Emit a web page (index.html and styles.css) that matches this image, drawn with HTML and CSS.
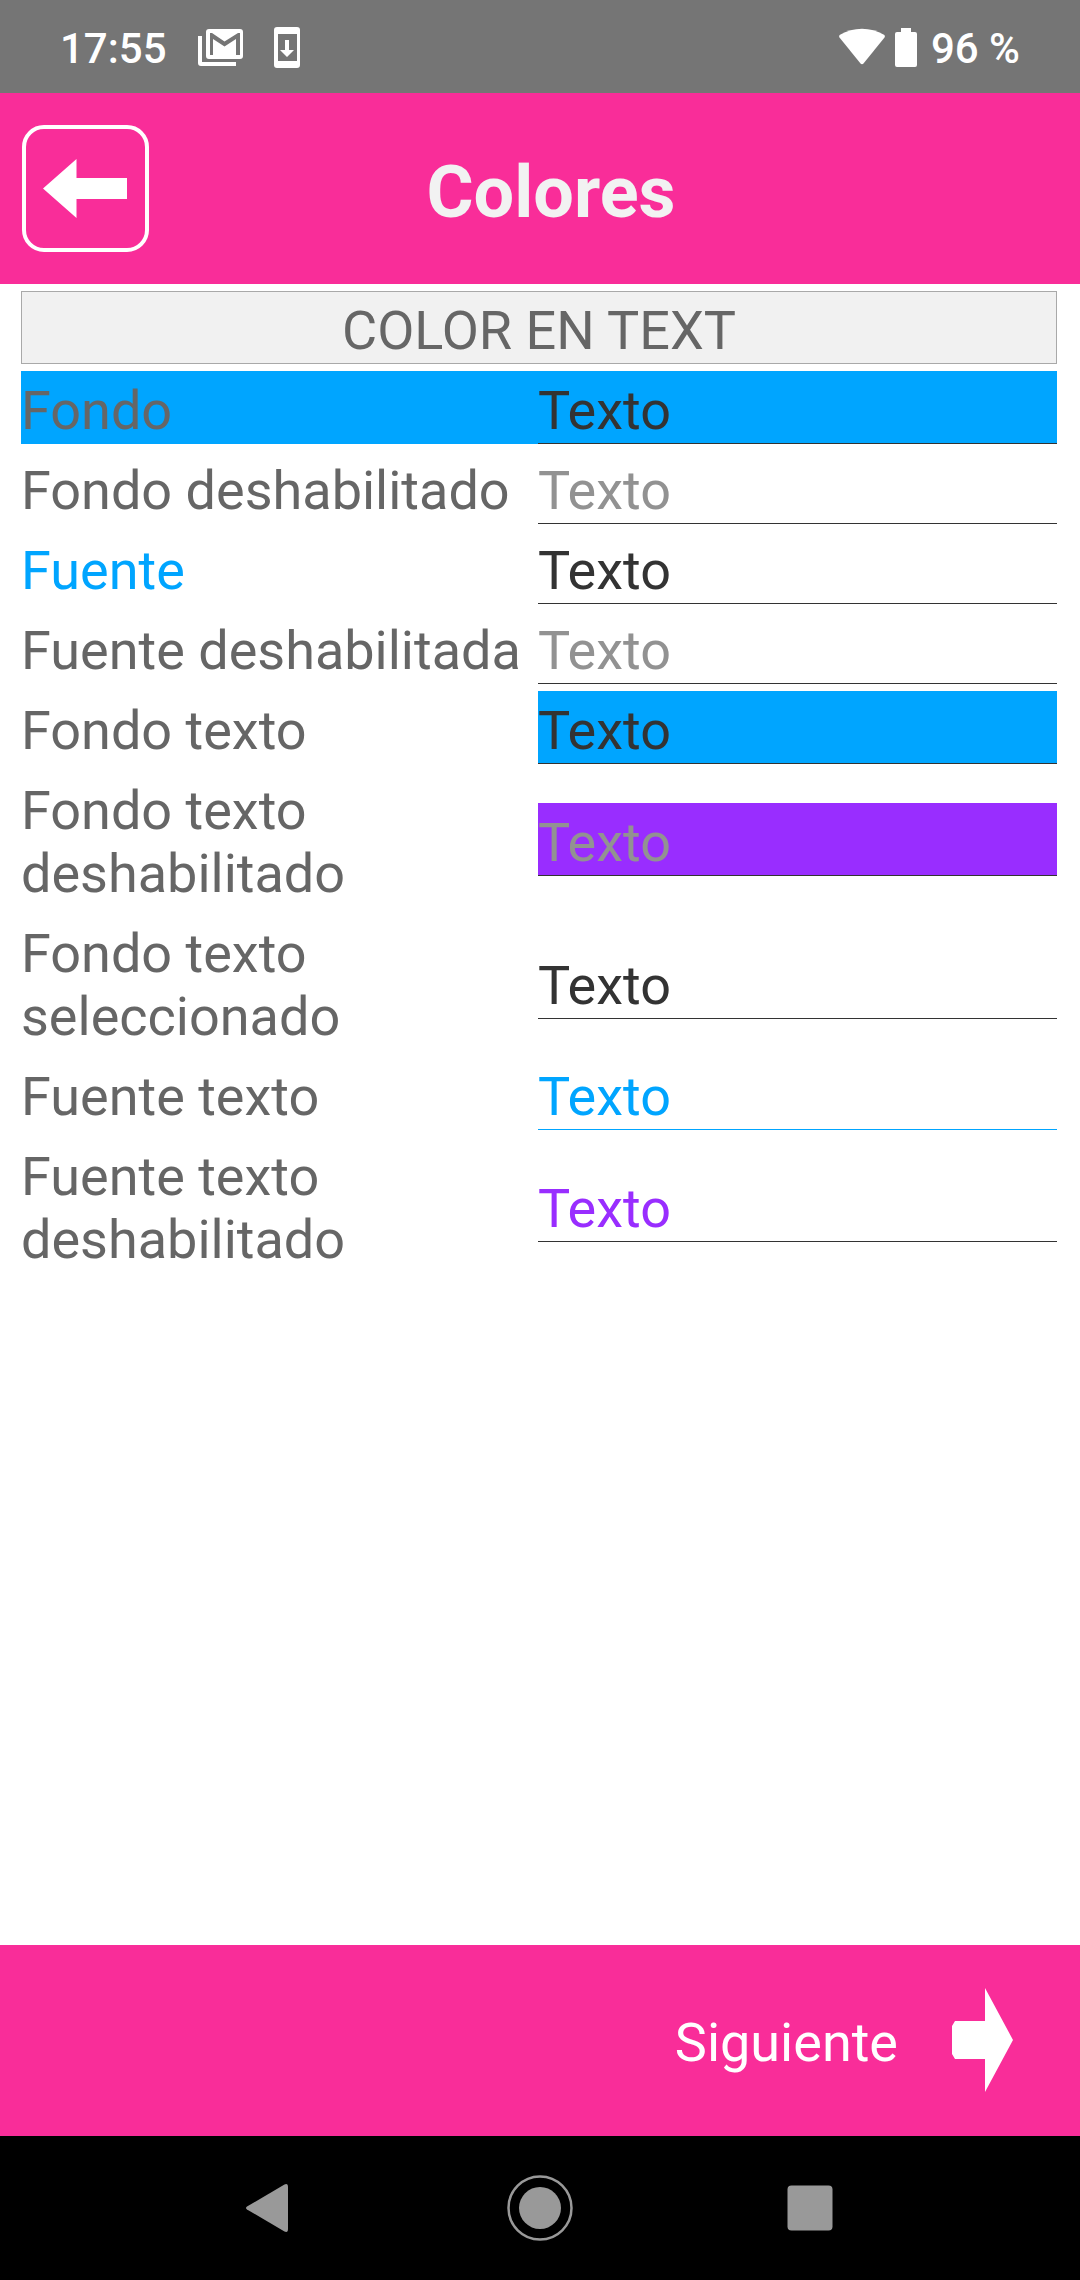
FILE: index.html
```html
<!DOCTYPE html>
<html lang="es">
<head>
    <meta charset="UTF-8">
    <meta name="viewport" content="width=device-width, initial-scale=1.0">
    <title>Colores</title>
    <link rel="stylesheet" href="styles.css">
</head>
<body>
    <div class="status-bar">
        <span class="status-time">17:55</span>
        <svg class="icon-mail" width="46" height="40" viewBox="0 0 46 40" fill="#fff">
            <path d="M0 8h4v26h34v4H3a3 3 0 0 1-3-3z"/>
            <path fill-rule="evenodd" d="M11 1h31a3 3 0 0 1 3 3v24a3 3 0 0 1-3 3H11a3 3 0 0 1-3-3V4a3 3 0 0 1 3-3zM12 5v22h3V11l11.500 7.500L38 11v16h4V5h-2L26.500 13.500 14 5z"/>
        </svg>
        <svg class="icon-phone" width="26" height="42" viewBox="0 0 26 42" fill="#fff">
            <path fill-rule="evenodd" d="M3 0h20a3 3 0 0 1 3 3v35a3 3 0 0 1-3 3H3a3 3 0 0 1-3-3V3a3 3 0 0 1 3-3zM4 7v27h19V7z"/>
            <path d="M11 13h4v10h5l-7 7-7-7h5z"/>
        </svg>
        <div class="status-right">
            <svg width="46" height="40" viewBox="0 0 46 40" fill="#fff">
                <path d="M.500 9.500Q-.500 8 1 6.800C14-1.400 32-1.400 45 6.800q1.500 1.200.500 2.700L24.500 35.500q-1.500 1.500-3 0z"/>
            </svg>
            <svg width="22" height="40" viewBox="0 0 22 40" fill="#fff">
                <path d="M6 0h10v4h4a2 2 0 0 1 2 2v31a2 2 0 0 1-2 2H2a2 2 0 0 1-2-2V6a2 2 0 0 1 2-2h4z"/>
            </svg>
            <span class="status-battery">96 %</span>
        </div>
    </div>

    <header class="header">
        <button type="button" class="back-button" aria-label="Volver">
            <svg width="86" height="60" viewBox="0 0 86 60" fill="#fff">
                <path d="M0 29.500L33.500 0v19H84v21H33.500v19z"/>
            </svg>
        </button>
        <h1 class="title">Colores</h1>
    </header>

    <main class="content">
        <h2 class="section-title">COLOR EN TEXT</h2>

        <div class="row row-fondo">
            <label for="fondo">Fondo</label>
            <input type="text" id="fondo" value="Texto">
        </div>
        <div class="row">
            <label for="fondo-des">Fondo deshabilitado</label>
            <input type="text" id="fondo-des" value="Texto" disabled>
        </div>
        <div class="row row-fuente">
            <label for="fuente">Fuente</label>
            <input type="text" id="fuente" value="Texto">
        </div>
        <div class="row">
            <label for="fuente-des">Fuente deshabilitada</label>
            <input type="text" id="fuente-des" value="Texto" disabled>
        </div>
        <div class="row">
            <label for="fondo-texto">Fondo texto</label>
            <input type="text" id="fondo-texto" class="fondo-azul" value="Texto">
        </div>
        <div class="row">
            <label for="fondo-texto-des">Fondo texto deshabilitado</label>
            <input type="text" id="fondo-texto-des" class="fondo-morado" value="Texto" disabled>
        </div>
        <div class="row">
            <label for="fondo-texto-sel">Fondo texto seleccionado</label>
            <input type="text" id="fondo-texto-sel" class="fondo-seleccion" value="Texto">
        </div>
        <div class="row">
            <label for="fuente-texto">Fuente texto</label>
            <input type="text" id="fuente-texto" class="texto-azul" value="Texto">
        </div>
        <div class="row">
            <label for="fuente-texto-des">Fuente texto deshabilitado</label>
            <input type="text" id="fuente-texto-des" class="texto-morado" value="Texto" disabled>
        </div>
    </main>

    <footer class="footer">
        <button type="button" class="next-button">
            <span>Siguiente</span>
            <svg width="62" height="108" viewBox="0 0 62 108" fill="#fff">
                <path d="M3 34h30V1l28 52-28 52V72H3l-3-5V39z"/>
            </svg>
        </button>
    </footer>

    <nav class="nav-bar">
        <button type="button" aria-label="Atrás">
            <svg width="66" height="66" viewBox="0 0 66 66" fill="#999">
                <path d="M10 31.500L47.500 9.500Q51 8 51 12v42q0 4-3.500 2.500L10 34.500q-2-1.500 0-3z"/>
            </svg>
        </button>
        <button type="button" aria-label="Inicio">
            <svg width="66" height="66" viewBox="0 0 66 66">
                <circle cx="33" cy="33" r="31.500" fill="none" stroke="#999" stroke-width="2.500"/>
                <circle cx="33" cy="33" r="21" fill="#999"/>
            </svg>
        </button>
        <button type="button" aria-label="Recientes">
            <svg width="66" height="66" viewBox="0 0 66 66">
                <rect x="10.500" y="10.500" width="45" height="45" rx="4" fill="#999"/>
            </svg>
        </button>
    </nav>
</body>
</html>
```
FILE: styles.css
```css
* {
    box-sizing: border-box;
}
body {
    display: flex;
    flex-direction: column;
    min-height: 100vh;
    margin: 0;
    background-color: #fff;
    color: #666;
    font-family: Roboto, sans-serif;
    font-size: 54px;
    line-height: 63px;
}
button {
    padding: 0;
    border: none;
    background: none;
    color: #fff;
    font: inherit;
    cursor: pointer;
}
svg {
    display: block;
}

/* barra de estado */
.status-bar {
    display: flex;
    align-items: center;
    height: 93px;
    padding: 2px 60px 0;
    background-color: #757575;
    color: #fff;
    font-size: 42px;
    font-weight: 500;
    line-height: 50px;
}
.status-bar span {
    padding-top: 2px;
}
.icon-mail {
    margin-left: 31px;
}
.icon-phone {
    margin-left: 30px;
}
.status-right {
    display: flex;
    align-items: center;
    gap: 10px;
    margin-left: auto;
}
.status-battery {
    margin-left: 4px;
}

/* cabecera */
.header {
    display: flex;
    align-items: center;
    height: 191px;
    padding-left: 22px;
    background-color: #f92d99;
}
.back-button {
    display: flex;
    align-items: center;
    justify-content: center;
    width: 127px;
    height: 127px;
    border: 4px solid #fff;
    border-radius: 22px;
}
.title {
    flex: 1;
    margin: 0 127px 0 0;
    padding-top: 9px;
    color: #f2f2f2;
    font-size: 72px;
    font-weight: 700;
    line-height: 84px;
    text-align: center;
}

/* contenido */
.content {
    display: flex;
    flex: 1;
    flex-direction: column;
    gap: 7px;
    padding: 7px 23px 7px 21px;
}
.section-title {
    margin: 0;
    padding: 7px 0 1px;
    border: 1px solid #a9a9a9;
    background-color: #f1f1f1;
    font-size: 54px;
    font-weight: 400;
    text-align: center;
}
.row {
    display: grid;
    grid-template-columns: calc(50% - 1px) 1fr;
    align-items: center;
}
.row label {
    padding: 8px 0 2px;
}
.row input {
    width: 100%;
    height: 73px;
    padding: 8px 0 1px;
    border: none;
    border-bottom: 1px solid #333;
    border-radius: 0;
    background-color: transparent;
    color: #333;
    font: inherit;
}
.row input:disabled {
    color: #929292;
}
.row-fondo {
    background-color: #00a5ff;
}
.row-fuente label {
    color: #00a5ff;
}
.row .fondo-azul {
    background-color: #00a5ff;
}
.row .fondo-morado {
    background-color: #992dff;
}
.row .fondo-seleccion:focus {
    background-color: #00a5ff;
}
.row .texto-azul {
    border-color: #00a5ff;
    color: #00a5ff;
}
.row .texto-morado:disabled {
    color: #992dff;
}

/* pie */
.footer {
    display: flex;
    justify-content: flex-end;
    height: 191px;
    padding-right: 66px;
    background-color: #f92d99;
}
.next-button {
    display: flex;
    align-items: center;
    gap: 54px;
}
.next-button span {
    padding-top: 4px;
}

/* barra de navegación */
.nav-bar {
    display: grid;
    grid-template-columns: repeat(3, 1fr);
    height: 144px;
    padding: 0 12.5%;
    background-color: #000;
}
.nav-bar button {
    display: flex;
    align-items: center;
    justify-content: center;
}
```
